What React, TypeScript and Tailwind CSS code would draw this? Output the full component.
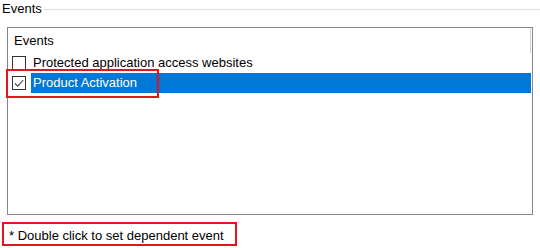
import React from "react";

function Checkbox({ checked }: { checked?: boolean }) {
  return (
    <div className="w-[14px] h-[14px] border border-[#333333] bg-white shrink-0 flex items-center justify-center">
      {checked && (
        <svg width="12" height="12" viewBox="0 0 12 12">
          <path d="M2 6.5 L4.8 9.2 L10.2 3" fill="none" stroke="#444444" strokeWidth="1.1" />
        </svg>
      )}
    </div>
  );
}

export default function App() {
  return (
    <div
      className="w-[540px] h-[248px] bg-white text-black text-[13px] overflow-hidden"
      style={{ fontFamily: '"Liberation Sans", Arial, sans-serif' }}
    >
      <div className="h-[18px] flex items-center">
        <span className="pl-[2px] leading-[18px] -mt-[1px]">Events</span>
        <div className="flex-1 h-px bg-[#dcdcdc] ml-[2px]" />
      </div>
      <div className="mt-[9px] ml-[7px] w-[526px] h-[188px] border border-[#828790] relative">
        <div className="absolute left-[522px] top-[1px] w-px h-[24px] bg-[#d0d0d0]" />
        <div className="h-[25px] pt-[3px] pl-[6px] leading-[20px]">Events</div>
        <div className="h-[20px] flex items-center pl-[4px]">
          <Checkbox />
          <span className="ml-[5px] pl-[2px] leading-[20px]">Protected application access websites</span>
        </div>
        <div className="h-[20px] flex items-center pl-[4px] pr-[1px]">
          <Checkbox checked />
          <span className="ml-[5px] pl-[2px] leading-[20px] flex-1 bg-[#0078d7] text-white">Product Activation</span>
        </div>
        <div className="absolute left-[-2px] top-[41px] w-[153px] h-[29px] border-2 border-[#e2141e]" />
      </div>
      <div className="mt-[7px] ml-[2px] w-[235px] h-[24px] border-2 border-[#e2141e] pl-[5px] pt-[2px] leading-[20px]">
        * Double click to set dependent event
      </div>
    </div>
  );
}
